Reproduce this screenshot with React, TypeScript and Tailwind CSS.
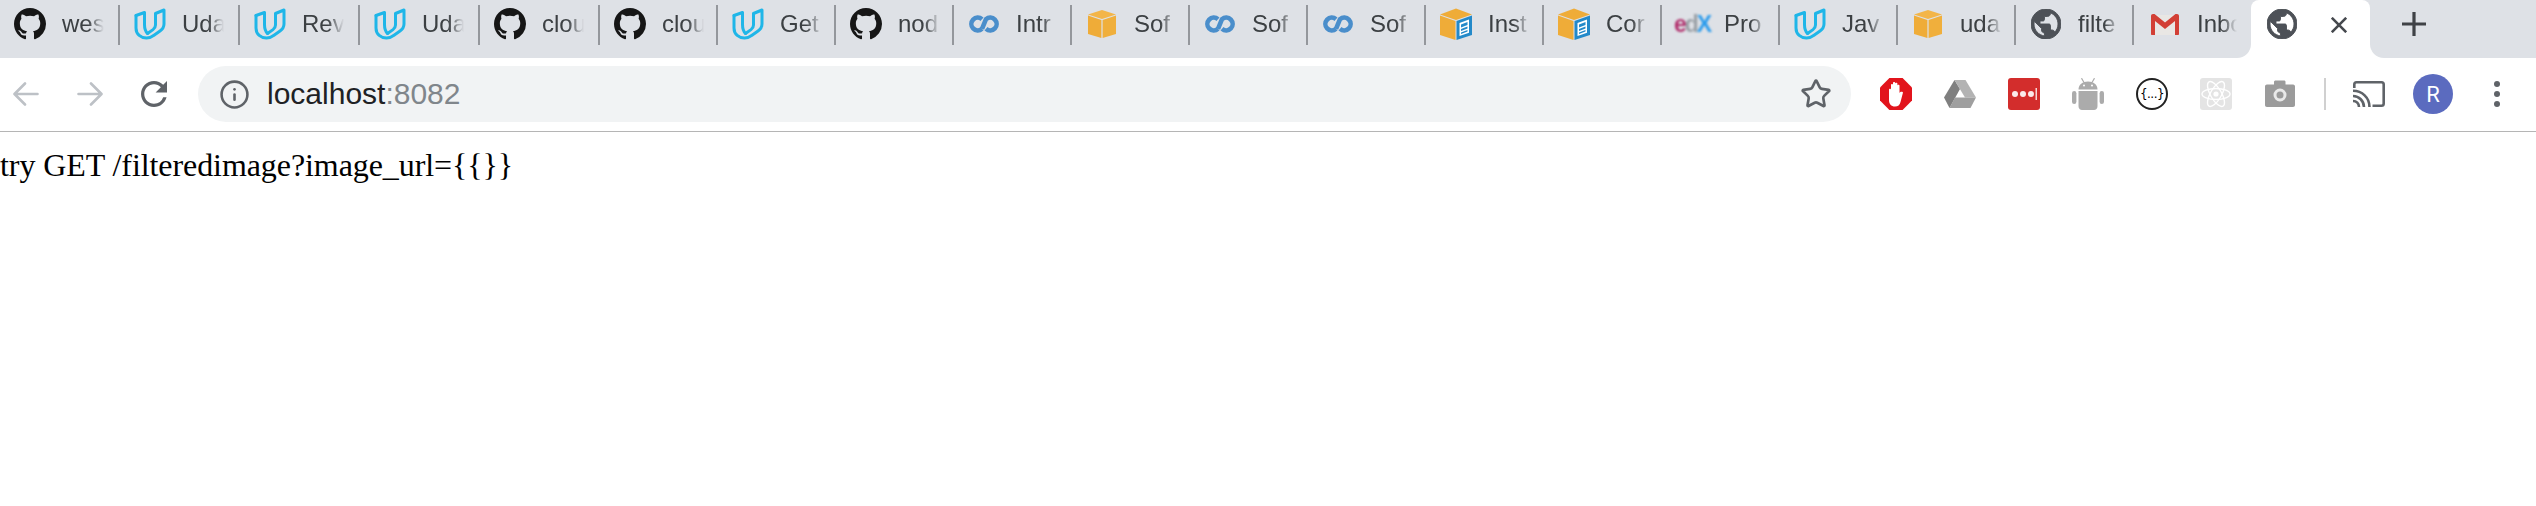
import { Info, Star } from 'lucide-react';

const GITHUB = 'M8 0C3.58 0 0 3.58 0 8c0 3.54 2.29 6.53 5.47 7.59.4.07.55-.17.55-.38 0-.19-.01-.82-.01-1.49-2.01.37-2.53-.49-2.69-.94-.09-.23-.48-.94-.82-1.13-.28-.15-.68-.52-.01-.53.63-.01 1.08.58 1.23.82.72 1.21 1.87.87 2.33.66.07-.52.28-.87.51-1.07-1.78-.2-3.64-.89-3.64-3.95 0-.87.31-1.59.82-2.15-.08-.2-.36-1.02.08-2.12 0 0 .67-.21 2.2.82.64-.18 1.32-.27 2-.27.68 0 1.36.09 2 .27 1.53-1.04 2.2-.82 2.2-.82.44 1.1.16 1.92.08 2.12.51.56.82 1.27.82 2.15 0 3.07-1.87 3.75-3.65 3.95.29.25.54.73.54 1.48 0 1.07-.01 1.93-.01 2.2 0 .21.15.46.55.38A8.013 8.013 0 0016 8c0-4.42-3.58-8-8-8z';
const GLOBE = 'M12 2C6.48 2 2 6.48 2 12s4.48 10 10 10 10-4.48 10-10S17.52 2 12 2zm-1 17.93c-3.95-.49-7-3.85-7-7.93 0-.62.08-1.21.21-1.79L9 15v1c0 1.1.9 2 2 2v1.93zm6.9-2.54c-.26-.81-1-1.39-1.9-1.39h-1v-3c0-.55-.45-1-1-1H8v-2h2c.55 0 1-.45 1-1V7h2c1.1 0 2-.9 2-2v-.41c2.93 1.19 5 4.06 5 7.41 0 2.08-.8 3.97-2.1 5.39z';

type IconKind = 'github' | 'udacity' | 'coursera' | 'box' | 'boxdoc' | 'edx' | 'globe' | 'gmail';

function GithubIcon() {
  return (
    <svg viewBox="0 0 16 16" className="w-8 h-8">
      <path d={GITHUB} fill="#161616" />
    </svg>
  );
}

function UdacityIcon() {
  return (
    <svg viewBox="0 0 32 32" className="w-8 h-8" fill="none" stroke="#1fb6e8" strokeWidth="3" strokeLinejoin="round" strokeLinecap="round">
      <path d="M2 7.5V20C2 26.5 7 30 12.5 30 15.5 30 17.5 29 20 27.2L26 23C28.8 21 30 19 30 16V2L21.5 5.5V17C21.5 19 20.6 20.4 19 21.6L13.5 25.5" />
      <path d="M2 7.5L10.5 4.5V16.5C10.5 20.5 11.5 23.5 13.5 25.5" />
    </svg>
  );
}

function CourseraIcon() {
  return (
    <svg viewBox="0 0 32 32" className="w-8 h-8" fill="none" stroke="#4a8ecb" strokeWidth="4.6">
      <path d="M14 11.2A6.4 6.4 0 1 0 14 20.8" />
      <path d="M18 20.8A6.4 6.4 0 1 0 18 11.2L14 20.8" />
    </svg>
  );
}

function BoxIcon() {
  return (
    <svg viewBox="0 0 32 32" className="w-8 h-8">
      <path d="M2 6.5L16 2L30 6.5L16 11Z" fill="#f3b548" />
      <path d="M2 7.5L15.4 12V30L2 26Z" fill="#efac38" />
      <path d="M30 7.5L16.6 12V30L30 26Z" fill="#f0af3c" />
    </svg>
  );
}

function BoxDocIcon() {
  return (
    <svg viewBox="0 0 32 32" className="w-8 h-8">
      <path d="M0 6.5L16 0.5L32 6.5L16 12Z" fill="#efac38" />
      <path d="M0 7.5L15.5 13V32L0 27Z" fill="#efac38" />
      <path d="M32 7.5L16.5 13V32L32 27Z" fill="#2389c9" />
      <path d="M19.5 15L29 11.5V24.8L19.5 28Z" fill="#ffffff" />
      <path d="M21 16.5L27.5 14V17L21 19.5ZM21 21L27.5 18.5V20.5L21 23ZM21 24.5L27.5 22V23.5L21 26Z" fill="#2389c9" />
    </svg>
  );
}

function EdxIcon() {
  return (
    <div className="w-8 h-8 flex items-center justify-center font-['Liberation_Sans',sans-serif] font-bold text-[23px] tracking-[-2px] blur-[0.8px]">
      <span className="text-[#b12f6c]">e</span>
      <span className="text-[#9aa0a6]">d</span>
      <span className="text-[#2c9cec]">X</span>
    </div>
  );
}

function GlobeIcon() {
  return (
    <svg viewBox="2 2 20 20" className="w-[30px] h-[30px]">
      <path d={GLOBE} fill="#4d5157" stroke="#4d5157" strokeWidth="0.6" />
    </svg>
  );
}

function GmailIcon() {
  return (
    <svg viewBox="0 0 28 21" className="w-7 h-[21px]">
      <path d="M0 1H28V21H0Z" fill="#e9e7e4" />
      <path d="M3 0L14 9L25 0V4L14 14L3 4Z" fill="#b8b4b0" opacity="0.6" />
      <path d="M0 2C0 .8 .8 0 2 0H3.5L14 8.5L24.5 0H26C27.2 0 28 .8 28 2V20C28 20.6 27.6 21 27 21H24V7L14 15L4 7V21H1C.4 21 0 20.6 0 20Z" fill="#d23f35" />
    </svg>
  );
}

function TabIcon({ kind }: { kind: IconKind }) {
  if (kind === 'github') return <GithubIcon />;
  if (kind === 'udacity') return <UdacityIcon />;
  if (kind === 'coursera') return <CourseraIcon />;
  if (kind === 'box') return <BoxIcon />;
  if (kind === 'boxdoc') return <BoxDocIcon />;
  if (kind === 'edx') return <EdxIcon />;
  if (kind === 'gmail') return <GmailIcon />;
  return <GlobeIcon />;
}

// titles are what stays visible in the squeezed tabs
const tabs: { title: string; icon: IconKind; width: string }[] = [
  { title: 'wes', icon: 'github', width: 'w-[120px]' },
  { title: 'Uda', icon: 'udacity', width: 'w-[120px]' },
  { title: 'Rev', icon: 'udacity', width: 'w-[120px]' },
  { title: 'Uda', icon: 'udacity', width: 'w-[120px]' },
  { title: 'clou', icon: 'github', width: 'w-[120px]' },
  { title: 'clou', icon: 'github', width: 'w-[118px]' },
  { title: 'Get', icon: 'udacity', width: 'w-[118px]' },
  { title: 'nod', icon: 'github', width: 'w-[118px]' },
  { title: 'Intr', icon: 'coursera', width: 'w-[118px]' },
  { title: 'Sof', icon: 'box', width: 'w-[118px]' },
  { title: 'Sof', icon: 'coursera', width: 'w-[118px]' },
  { title: 'Sof', icon: 'coursera', width: 'w-[118px]' },
  { title: 'Inst', icon: 'boxdoc', width: 'w-[118px]' },
  { title: 'Cor', icon: 'boxdoc', width: 'w-[118px]' },
  { title: 'Pro', icon: 'edx', width: 'w-[118px]' },
  { title: 'Jav', icon: 'udacity', width: 'w-[118px]' },
  { title: 'uda', icon: 'box', width: 'w-[118px]' },
  { title: 'filte', icon: 'globe', width: 'w-[118px]' },
];

function Tab({ title, icon, width }: { title: string; icon: IconKind; width: string }) {
  return (
    <div className={`${width} h-full shrink-0 bg-[#dee1e6] flex items-center pl-[14px]`}>
      <div className="w-8 h-8 mb-2.5 shrink-0 flex items-center justify-center">
        <TabIcon kind={icon} />
      </div>
      <div className="ml-4 mb-2.5 w-[42px] whitespace-nowrap text-[24px] leading-8 text-[#3c4043] [mask-image:linear-gradient(to_right,black_62%,transparent)]">
        {title}
      </div>
      <div className="ml-auto mb-2 w-0.5 h-10 bg-[#94979c]" />
    </div>
  );
}

function TabStrip() {
  return (
    <div className="h-[58px] flex bg-white">
      {tabs.map((tab, i) => (
        <Tab key={i} {...tab} />
      ))}
      <div className="w-[117px] h-full shrink-0 bg-[#dee1e6] rounded-br-[14px] flex items-center pl-[17px]">
        <div className="w-7 h-[21px] mb-[9px] shrink-0">
          <GmailIcon />
        </div>
        <div className="ml-[18px] mb-2.5 w-[40px] whitespace-nowrap text-[24px] leading-8 text-[#3c4043] [mask-image:linear-gradient(to_right,black_62%,transparent)]">
          Inbo
        </div>
      </div>
      <div className="w-[119px] h-full shrink-0 bg-[#dee1e6]">
        <div className="h-full bg-white rounded-t-[8px] flex items-center pl-[16px]">
          <div className="mb-2.5 w-[30px] h-[30px] shrink-0">
            <GlobeIcon />
          </div>
          <svg viewBox="0 0 16 16" className="ml-[34px] mb-[8px] w-4 h-4" fill="none" stroke="#45484d" strokeWidth="2.6">
            <path d="M0.8 0.8L15.2 15.2M15.2 0.8L0.8 15.2" />
          </svg>
        </div>
      </div>
      <div className="flex-1 h-full bg-[#dee1e6] rounded-bl-[14px] flex items-center pl-[32px]">
        <svg viewBox="0 0 24 24" className="mb-2.5 w-6 h-6" fill="#3f4246">
          <path d="M10.4 0H13.6V10.4H24V13.6H13.6V24H10.4V13.6H0V10.4H10.4Z" />
        </svg>
      </div>
    </div>
  );
}

function NavArrow({ flip }: { flip?: boolean }) {
  return (
    <svg viewBox="0 0 26 26" className={`w-[26px] h-[26px] ${flip ? 'rotate-180' : ''}`} fill="none" stroke="#bdc1c6" strokeWidth="2.6" strokeLinecap="round" strokeLinejoin="round">
      <path d="M24.5 13H2M12 2.5L1.5 13L12 23.5" />
    </svg>
  );
}

function ReloadIcon() {
  return (
    <svg viewBox="4 4 16 16" className="w-[26px] h-[26px]">
      <path d="M17.65 6.35A7.95 7.95 0 0 0 12 4C7.58 4 4.01 7.58 4.01 12S7.58 20 12 20c3.73 0 6.84-2.55 7.73-6h-2.08A5.99 5.99 0 0 1 12 18c-3.31 0-6-2.69-6-6s2.69-6 6-6c1.66 0 3.14.69 4.22 1.78L13 11h7V4l-2.35 2.35z" fill="#5f6368" />
    </svg>
  );
}

function AdBlockIcon() {
  return (
    <svg viewBox="0 0 32 32" className="w-8 h-8">
      <path d="M9.4 0H22.6L32 9.4V22.6L22.6 32H9.4L0 22.6V9.4Z" fill="#e2141c" />
      <path d="M9 11.5C9 10.5 11 10.5 11 11.5V7C11 5.8 13 5.8 13 7V5C13 3.8 15.2 3.8 15.2 5V5.6C15.2 4.6 17.4 4.6 17.4 5.6V7.5C17.4 6.5 19.5 6.5 19.5 7.5V15C20 13.5 22.8 13.3 23 14.5L20.5 24C19.8 27 18 28.5 15 28.5C11 28.5 9 26 9 22Z" fill="#ffffff" />
    </svg>
  );
}

function DriveIcon() {
  return (
    <svg viewBox="0 0 32 32" className="w-8 h-8">
      <path d="M10.5 2L16 11L5.5 30L0 19.5Z" fill="#7f7f7f" />
      <path d="M10.5 2H21.5L32 19.5H21Z" fill="#b3b3b3" />
      <path d="M11 19.5H32L26.5 30H5.5Z" fill="#9f9f9f" />
    </svg>
  );
}

function LastPassIcon() {
  return (
    <svg viewBox="0 0 32 32" className="w-8 h-8">
      <rect width="32" height="32" rx="3" fill="#d32d2c" />
      <circle cx="7" cy="16" r="3" fill="#ffffff" opacity="0.9" />
      <circle cx="15" cy="16" r="3" fill="#ffffff" opacity="0.9" />
      <circle cx="23" cy="16" r="3" fill="#ffffff" opacity="0.9" />
      <rect x="27.5" y="10" width="1.5" height="12" fill="#ffffff" opacity="0.8" />
    </svg>
  );
}

function AndroidIcon() {
  return (
    <svg viewBox="0 0 32 32" className="w-8 h-8" fill="#ababab">
      <path d="M6.5 11.5C6.5 6.5 10.5 3.5 16 3.5S25.5 6.5 25.5 11.5Z" />
      <path d="M9.5 0.2L12 4.5M22.5 0.2L20 4.5" stroke="#ababab" strokeWidth="1.2" />
      <path d="M6.5 13H25.5V28C25.5 30.5 24 32 22 32H10C8 32 6.5 30.5 6.5 28Z" />
      <rect x="0" y="13" width="4.4" height="13" rx="2.2" />
      <rect x="27.6" y="13" width="4.4" height="13" rx="2.2" />
      <circle cx="12" cy="7.5" r="1" fill="#ffffff" />
      <circle cx="20" cy="7.5" r="1" fill="#ffffff" />
    </svg>
  );
}

function JsonIcon() {
  return (
    <div className="w-8 h-8 rounded-full border-2 border-[#222222] flex items-center justify-center text-[12px] leading-none text-black font-['DejaVu_Sans',sans-serif] tracking-[-0.5px]">
      {'{...}'}
    </div>
  );
}

function ReactIcon() {
  return (
    <svg viewBox="0 0 32 32" className="w-8 h-8" fill="none" stroke="#ffffff" strokeWidth="1.4">
      <rect width="32" height="32" rx="3" fill="#e4e4e4" stroke="none" />
      <ellipse cx="16" cy="16" rx="14" ry="5.5" />
      <ellipse cx="16" cy="16" rx="14" ry="5.5" transform="rotate(60 16 16)" />
      <ellipse cx="16" cy="16" rx="14" ry="5.5" transform="rotate(120 16 16)" />
      <circle cx="16" cy="16" r="2.6" fill="#ffffff" stroke="none" />
    </svg>
  );
}

function CameraIcon() {
  return (
    <svg viewBox="0 0 32 32" className="w-8 h-8">
      <path d="M10 6.5V4C10 3 10.8 2.5 11.5 2.5H20C21 2.5 21.5 3 21.5 4V6.5H29C30.5 6.5 31 7.5 31 8.5V27C31 28.3 30.3 29 29 29H3C1.7 29 1 28.3 1 27V8.5C1 7.5 1.5 6.5 3 6.5Z" fill="#9b9b9b" />
      <circle cx="16" cy="17" r="5" fill="none" stroke="#e9e9e9" strokeWidth="3" />
    </svg>
  );
}

function CastIcon() {
  return (
    <svg viewBox="0 0 32 26" className="w-8 h-[26px]" fill="none" stroke="#5f6368" strokeWidth="2.6">
      <path d="M1.3 7V3.5C1.3 2 2.2 1.3 3.5 1.3H28.5C29.8 1.3 30.7 2 30.7 3.5V22.5C30.7 24 29.8 24.7 28.5 24.7H19.5" />
      <path d="M0 9.8C9 9.8 16.5 16.5 16.5 26" />
      <path d="M0 15C6 15 11 20 11 26" />
      <path d="M0 20C3.5 20 6 22.5 6 26" />
    </svg>
  );
}

function Toolbar() {
  return (
    <div className="h-[74px] pb-px border-b border-[#b5b5b5] flex items-center pl-[13px] bg-white">
      <div className="flex items-center gap-[38px]">
        <NavArrow />
        <NavArrow flip />
        <ReloadIcon />
      </div>
      <div className="ml-[31px] w-[1653px] h-14 shrink-0 rounded-full bg-[#f1f3f4] flex items-center pl-[21px] pr-[19px]">
        <Info size={31} color="#5f6368" strokeWidth={2} />
        <div className="ml-[17px] text-[30px] leading-none text-[#202124]">
          localhost<span className="text-[#80868b]">:8082</span>
        </div>
        <Star size={32} color="#5f6368" strokeWidth={2} className="ml-auto" />
      </div>
      <div className="ml-[29px] flex items-center gap-8">
        <AdBlockIcon />
        <DriveIcon />
        <LastPassIcon />
        <AndroidIcon />
        <JsonIcon />
        <ReactIcon />
        <CameraIcon />
      </div>
      <div className="ml-7 w-0.5 h-8 bg-[#d0d0d0]" />
      <div className="ml-[27px]">
        <CastIcon />
      </div>
      <div className="ml-7 w-10 h-10 rounded-full bg-[#5b6bbf] flex items-center justify-center text-white text-[22px] font-['Roboto',sans-serif]">
        R
      </div>
      <div className="ml-[41px] flex flex-col gap-1">
        <div className="w-1.5 h-1.5 rounded-full bg-[#5f6368]" />
        <div className="w-1.5 h-1.5 rounded-full bg-[#5f6368]" />
        <div className="w-1.5 h-1.5 rounded-full bg-[#5f6368]" />
      </div>
    </div>
  );
}

export default function App() {
  return (
    <div className="w-[2536px] h-[506px] overflow-hidden bg-white font-['Liberation_Sans',sans-serif]">
      <TabStrip />
      <Toolbar />
      <main className="pt-[15px] text-[32px] leading-[37px] tracking-[-0.08px] text-black font-['Liberation_Serif',serif] whitespace-nowrap">
        try GET /filteredimage?image_url={'{{}}'}
      </main>
    </div>
  );
}
